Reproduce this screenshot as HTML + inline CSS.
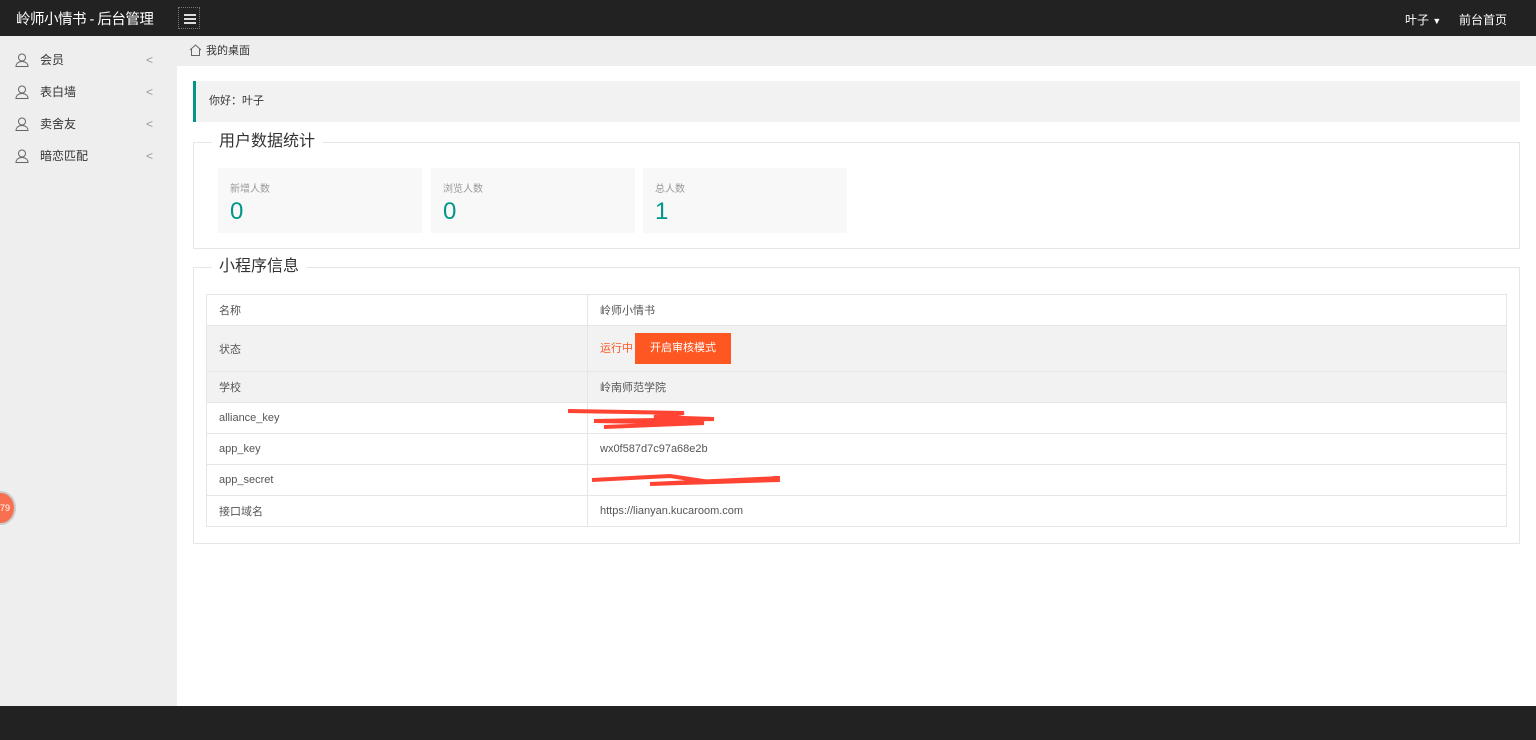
<!DOCTYPE html><html><head><meta charset="utf-8"><style>
*{margin:0;padding:0;box-sizing:border-box}
body{width:1536px;height:740px;overflow:hidden;background:#fff;font-family:"Liberation Sans","Noto Sans CJK SC",sans-serif;font-size:12px;color:#333;position:relative}
.hd{position:absolute;left:0;top:0;width:1536px;height:36px;background:#222;color:#fff}
.logo{position:absolute;left:16px;top:8px;font-size:14.5px;letter-spacing:-0.5px}
.menu{position:absolute;left:178px;top:7px;width:22px;height:22px;border:1px dotted #777}
.menu i{position:absolute;left:5px;width:12px;height:2px;background:#ddd}
.side{position:absolute;left:0;top:36px;width:177px;height:670px;background:#eee}
.side div{position:absolute;left:0;height:32px;width:177px;line-height:32px;padding-left:40px;font-size:12px;color:#333}
.side svg{position:absolute;left:15px;top:9px}
.side b{position:absolute;left:146px;top:0;font-weight:normal;color:#999}
.bc{position:absolute;left:177px;top:36px;width:1359px;height:30px;background:#eee;line-height:30px;padding-left:29px;font-size:11px}
.ft{position:absolute;left:0;top:706px;width:1536px;height:34px;background:#222}
.wel{position:absolute;left:193px;top:81px;width:1327px;height:41px;background:#f2f2f2;border-left:3px solid #009688;line-height:41px;padding-left:13px;font-size:11px}
.fs{position:absolute;left:193px;width:1327px;border:1px solid #e6e6e6}
.lg{position:absolute;left:18px;top:-11px;background:#fff;padding:0 7px;font-size:16px;color:#333;line-height:20px}
.card{position:absolute;top:168px;width:204px;height:65px;background:#f8f8f8}
.card p{position:absolute;left:12px;top:12px;font-size:10px;color:#999}
.card h2{position:absolute;left:12px;top:30px;font-size:24px;font-weight:normal;color:#009688}
table{position:absolute;left:206px;top:294px;width:1301px;border-collapse:collapse}
td{border:1px solid #e6e6e6;height:31px;padding-left:12px;font-size:11px;color:#555;vertical-align:middle}
td:first-child{width:381px}
tr.g td{background:#f2f2f2}
.btn{display:inline-block;background:#FF5722;color:#fff;width:96px;height:31px;line-height:31px;text-align:center;margin-left:2px;vertical-align:middle}
</style></head><body>
<div class="hd"><div class="logo">岭师小情书 - 后台管理</div>
<div class="menu"><i style="top:6px"></i><i style="top:10px"></i><i style="top:14px"></i></div>
<div style="position:absolute;left:1405px;top:11px;font-size:12px">叶子 <span style="font-size:9px">▼</span></div>
<div style="position:absolute;left:1459px;top:11px;font-size:12px">前台首页</div></div>
<div class="side">
<div style="top:8px"><svg width="14" height="14" viewBox="0 0 14 14" fill="none" stroke="#666"><circle cx="7" cy="4.5" r="3.5"/><path d="M1 13.5c0-3 2.5-5 6-5s6 2 6 5z"/></svg>会员<b>&lt;</b></div>
<div style="top:40px"><svg width="14" height="14" viewBox="0 0 14 14" fill="none" stroke="#666"><circle cx="7" cy="4.5" r="3.5"/><path d="M1 13.5c0-3 2.5-5 6-5s6 2 6 5z"/></svg>表白墙<b>&lt;</b></div>
<div style="top:72px"><svg width="14" height="14" viewBox="0 0 14 14" fill="none" stroke="#666"><circle cx="7" cy="4.5" r="3.5"/><path d="M1 13.5c0-3 2.5-5 6-5s6 2 6 5z"/></svg>卖舍友<b>&lt;</b></div>
<div style="top:104px"><svg width="14" height="14" viewBox="0 0 14 14" fill="none" stroke="#666"><circle cx="7" cy="4.5" r="3.5"/><path d="M1 13.5c0-3 2.5-5 6-5s6 2 6 5z"/></svg>暗恋匹配<b>&lt;</b></div>
</div>
<div style="position:absolute;left:-14px;top:491px;width:30px;height:34px;border-radius:50%;background:#f87050;border:2px solid #ccc;color:#fff;font-size:9px;line-height:30px;text-align:right;padding-right:4px">79</div>
<div class="bc"><svg style="position:absolute;left:12px;top:8px" width="13" height="12" viewBox="0 0 13 12" fill="none" stroke="#666"><path d="M1 6L6.5 1 12 6M2.5 5v6.5h8V5"/></svg>我的桌面</div>
<div class="wel">你好：叶子</div>
<div class="fs" style="top:142px;height:107px"><div class="lg">用户数据统计</div></div>
<div class="card" style="left:218px"><p>新增人数</p><h2>0</h2></div>
<div class="card" style="left:431px"><p>浏览人数</p><h2>0</h2></div>
<div class="card" style="left:643px"><p>总人数</p><h2>1</h2></div>
<div class="fs" style="top:267px;height:277px"><div class="lg">小程序信息</div></div>
<table>
<tr><td>名称</td><td>岭师小情书</td></tr>
<tr class="g"><td style="height:46px">状态</td><td><span style="color:#FF5722">运行中</span><span class="btn">开启审核模式</span></td></tr>
<tr class="g"><td>学校</td><td>岭南师范学院</td></tr>
<tr><td>alliance_key</td><td><svg width="180" height="22" style="vertical-align:middle;margin-left:-36px"><path d="M4 4L120 6 90 10 150 12 30 14 140 16 40 20" stroke="#f43" stroke-width="4" fill="none"/></svg></td></tr>
<tr><td>app_key</td><td>wx0f587d7c97a68e2b</td></tr>
<tr><td>app_secret</td><td><svg width="200" height="16" style="vertical-align:middle;margin-left:-10px"><path d="M2 8L80 4 120 10 190 6 60 12 190 8" stroke="#f43" stroke-width="4" fill="none"/></svg></td></tr>
<tr><td>接口域名</td><td>https://lianyan.kucaroom.com</td></tr>
</table>
<div class="ft"></div>
</body></html>
